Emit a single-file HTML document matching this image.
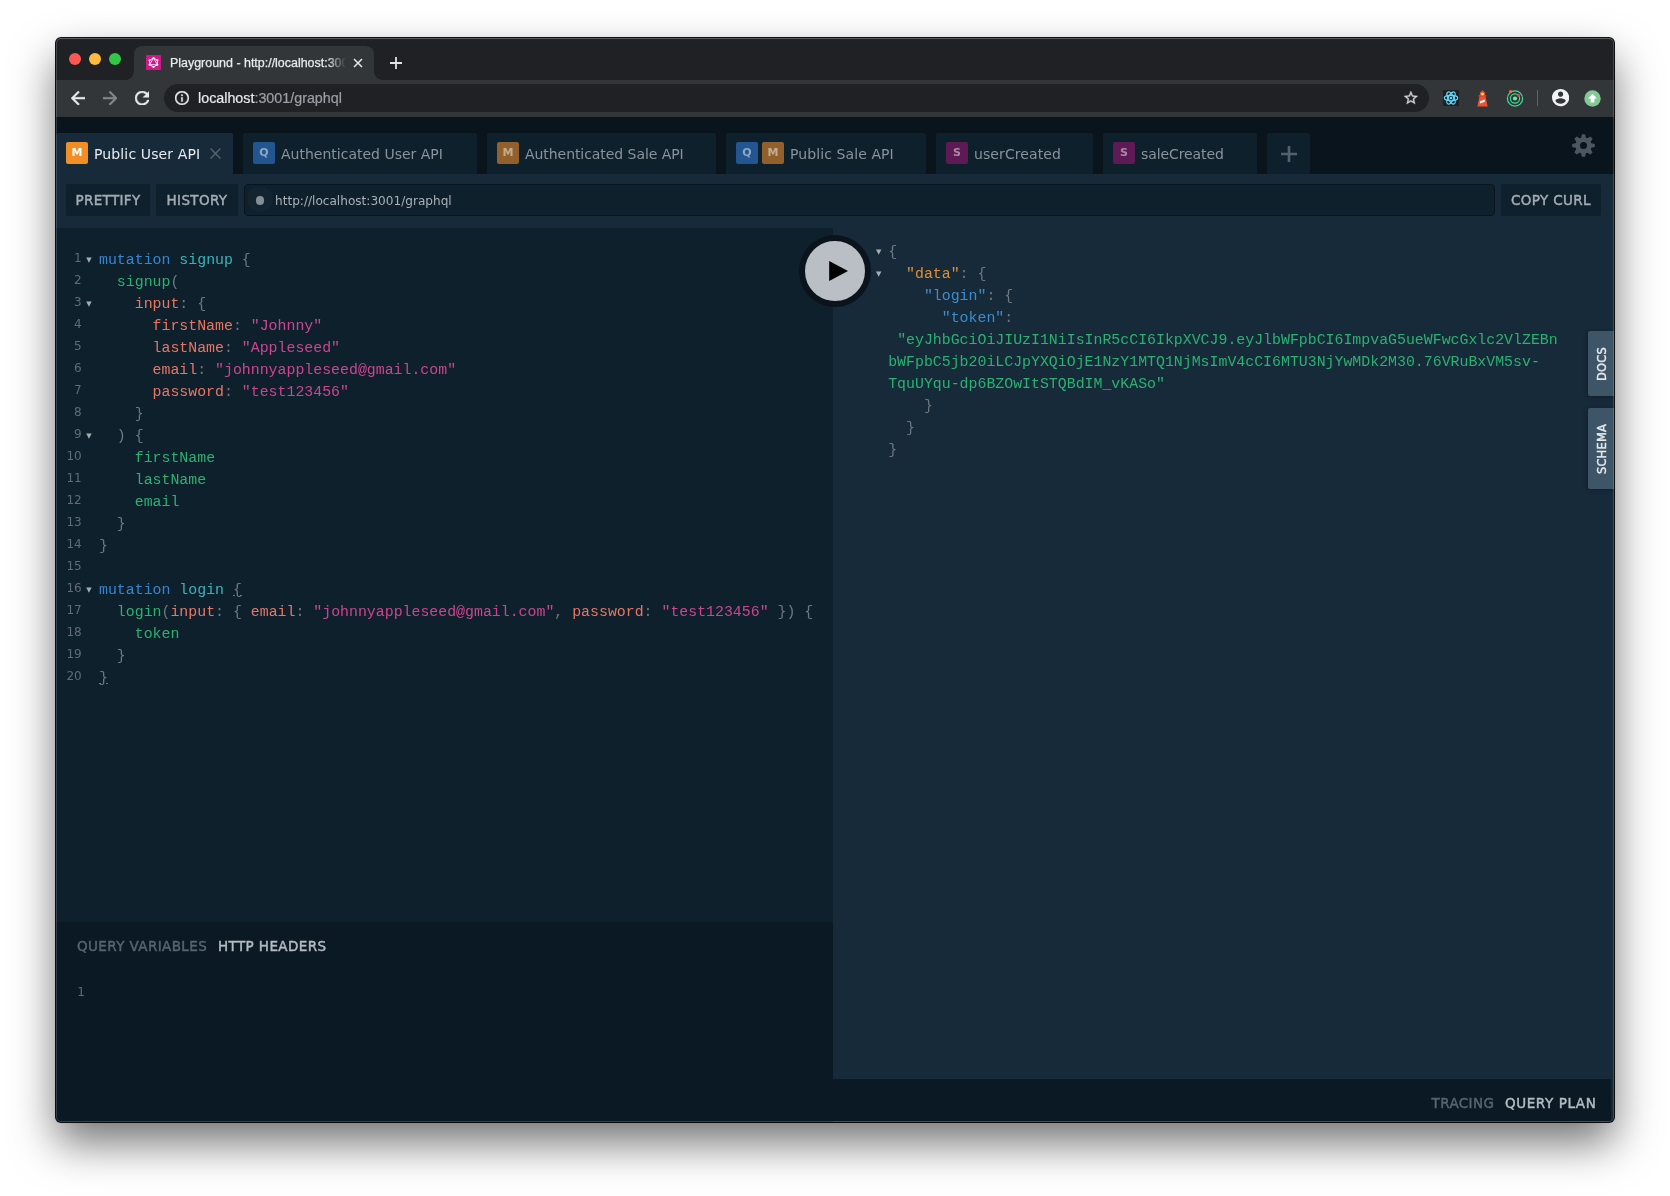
<!DOCTYPE html>
<html lang="en">
<head>
<meta charset="utf-8">
<title>Playground - http://localhost:3001/graphql</title>
<style>
*{box-sizing:border-box;margin:0;padding:0}
html,body{width:1670px;height:1196px;background:#fff;overflow:hidden}
body{position:relative;font-family:"Liberation Sans",sans-serif}
#win{position:absolute;left:56px;top:38px;width:1558px;height:1084px;border-radius:5px;background:#172a3a;
  box-shadow:0 0 0 1px rgba(0,0,0,.93),0 21px 44px rgba(0,0,0,.55),0 0 3px rgba(0,0,0,.12);overflow:hidden}
#inner{will-change:transform;position:absolute;left:-1px;top:-1px;width:1560px;height:1085px}
#hl{position:absolute;left:0;top:0;right:0;bottom:0;border-radius:5px;box-shadow:inset 0 0 0 1px rgba(255,255,255,.17),inset 0 1px 0 0 rgba(255,255,255,.12);pointer-events:none}
.abs{position:absolute}
/* chrome */
#strip{left:0;top:0;width:1560px;height:43px;background:#202124}
.tl{position:absolute;top:16px;width:12px;height:12px;border-radius:50%}
#ctab{left:79px;top:9px;width:240px;height:34px;background:#323639;border-radius:8px 8px 0 0}
#ctab:before,#ctab:after{content:"";position:absolute;bottom:0;width:8px;height:8px;background:radial-gradient(circle at 0 0,transparent 7.5px,#323639 8px)}
#ctab:before{left:-8px}
#ctab:after{right:-8px;transform:scaleX(-1)}
#toolbar{left:0;top:43px;width:1560px;height:37px;background:#323639}
#omni{left:109px;top:4px;width:1265px;height:28px;border-radius:14px;background:#202124}
/* playground */
#pg{left:0;top:80px;width:1560px;height:1005px;background:#172a3a}
#ptabs{left:0;top:0;width:1560px;height:57px;background:#09141c}
.sans{font-family:"DejaVu Sans","Liberation Sans",sans-serif}
.mono{font-family:"Liberation Mono",monospace}

/* pg tabs */
.ptab{position:absolute;top:16px;height:41px;background:#0f202d;border-radius:2px 2px 0 0;color:#89939b;font:14px "DejaVu Sans","Liberation Sans",sans-serif;white-space:nowrap}
.ptab.act{background:#172a3a;color:#e9ebed}
.ptab .t{position:absolute;top:1px;line-height:41px}
.ic{position:absolute;top:9px;width:22px;height:22px;border-radius:2px;color:rgba(255,255,255,.55);font:bold 11px/22px "DejaVu Sans","Liberation Sans",sans-serif;text-align:center}
.ptab .ic{color:rgba(255,255,255,.48)}.ic.m{background:#91602c}.ic.q{background:#235690}.ic.s{background:#5e1a54}
.ptab.act .ic.m{background:#f18f26;color:#fff}
#ptool{left:0;top:57px;width:1560px;height:54px;background:#172a3a}
.btn{position:absolute;top:10px;height:31.5px;background:#0f202d;border-radius:2px;color:#a3abb2;font:13.5px/32px "DejaVu Sans","Liberation Sans",sans-serif;-webkit-text-stroke:.45px #a3abb2;letter-spacing:.35px;text-align:center;white-space:nowrap}
#url{position:absolute;left:189px;top:10px;width:1251px;height:31.5px;background:#0f202d;border:1px solid #09141c;border-radius:4px;color:#a9b0b6;font:12.1px/29px "DejaVu Sans","Liberation Sans",sans-serif}
#editor{left:0;top:111px;width:778px;height:694px;background:#0f202d}
#vars{left:0;top:805px;width:778px;height:200px;background:#0b1924}
#result{left:778px;top:111px;width:781px;height:851px;background:#172a3a}
#bbar{left:0;top:962px;width:1556px;height:42px;background:#0b1924}
.ln{position:absolute;left:0;width:26.7px;text-align:right;color:#5f6b76;font:12px/22px "DejaVu Sans","Liberation Sans",sans-serif}
.cl{position:absolute;left:44px;white-space:pre;font:14.88px/22px "Liberation Mono",monospace;color:#6c7882}
.fd{position:absolute;width:10px;text-align:center;color:#a5adb3;font:7px/22px "DejaVu Sans",sans-serif}
.k{color:#3585d2}.d{color:#38b4b9}.p{color:#2bb170}.a{color:#e97663}.s{color:#cc4590}
.rk{color:#e28f2c}.rb{color:#3c8ccf}.rs{color:#2bb170}
.u{text-decoration:underline}

.vt{font:13.5px/20px "DejaVu Sans","Liberation Sans",sans-serif;white-space:nowrap;-webkit-text-stroke:.45px;letter-spacing:.4px}
.sdt{width:26px;background:#3d5567;border-radius:2px 0 0 2px;box-shadow:-1px 1px 4px rgba(0,0,0,.3)}
.sdt span{position:absolute;left:calc(50% + 1px);top:50%;transform:translate(-50%,-50%) rotate(-90deg);color:#e6eaed;font:11.5px/14px "DejaVu Sans","Liberation Sans",sans-serif;-webkit-text-stroke:.4px;letter-spacing:.2px;white-space:nowrap}
#play{left:744px;top:118px;width:72px;height:72px;border-radius:50%;background:#b9bfc4;border:6px solid #0b141c}

#ctitle{left:36px;top:0;width:176px;overflow:hidden;white-space:nowrap;color:#e8eaed;font:12.45px/34px "Liberation Sans",sans-serif;-webkit-text-stroke:.25px #e8eaed;-webkit-mask-image:linear-gradient(90deg,#000 157px,transparent 176px);mask-image:linear-gradient(90deg,#000 157px,transparent 176px)}
#ourl{left:34px;top:0;color:#9aa0a6;font:14.3px/28px "Liberation Sans",sans-serif;white-space:nowrap;-webkit-text-stroke:.2px}
</style>
</head>
<body>
<div id="win"><div id="inner">
  <div id="strip" class="abs">
    <div class="tl" style="left:14px;background:#fc5753"></div>
    <div class="tl" style="left:34px;background:#fdbc40"></div>
    <div class="tl" style="left:54px;background:#33c748"></div>

    <div id="ctab" class="abs">
      <svg class="abs" style="left:12.1px;top:8.9px" width="15" height="15" viewBox="0 0 16 16"><rect width="16" height="16" rx="1" fill="#d0188a"/><g fill="none" stroke="#fff" stroke-width="0.9"><path d="M8 3.2L12.2 5.6V10.4L8 12.8L3.8 10.4V5.6Z"/><path d="M8 3.2L12.2 10.4H3.8Z"/></g><g fill="#fff"><circle cx="8" cy="3.2" r="1.1"/><circle cx="12.2" cy="5.6" r="1.1"/><circle cx="12.2" cy="10.4" r="1.1"/><circle cx="8" cy="12.8" r="1.1"/><circle cx="3.8" cy="10.4" r="1.1"/><circle cx="3.8" cy="5.6" r="1.1"/></g></svg>
      <div id="ctitle" class="abs">Playground - http://localhost:3001/graphql</div>
      <svg class="abs" style="left:219px;top:12px" width="10" height="10" viewBox="0 0 10 10"><path d="M1 1L9 9M9 1L1 9" stroke="#e8eaed" stroke-width="1.5" fill="none"/></svg>
    </div>
    <svg class="abs" style="left:334px;top:19px" width="14" height="14" viewBox="0 0 14 14"><path d="M7 1V13M1 7H13" stroke="#e0e2e5" stroke-width="1.8" fill="none"/></svg>
  </div>
  <div id="toolbar" class="abs">

    <svg class="abs" style="left:15.8px;top:10.7px" width="14.4" height="14.4" viewBox="4 4 16 16"><path d="M20 11H7.83l5.59-5.59L12 4l-8 8 8 8 1.41-1.41L7.83 13H20v-2z" fill="#e8eaed" stroke="#e8eaed" stroke-width=".5"/></svg>
    <svg class="abs" style="left:47.9px;top:10.7px" width="14.4" height="14.4" viewBox="4 4 16 16"><path d="M12 4l-1.41 1.41L16.17 11H4v2h12.17l-5.58 5.59L12 20l8-8z" fill="#84878b" stroke="#84878b" stroke-width=".5"/></svg>
    <svg class="abs" style="left:80px;top:10.9px" width="14.4" height="14.4" viewBox="4 4 16 16"><path d="M17.65 6.35C16.2 4.9 14.21 4 12 4c-4.42 0-7.99 3.58-7.99 8s3.57 8 7.99 8c3.73 0 6.84-2.55 7.73-6h-2.08c-.82 2.33-3.04 4-5.65 4-3.31 0-6-2.69-6-6s2.69-6 6-6c1.66 0 3.14.69 4.22 1.78L13 11h7V4l-2.35 2.35z" fill="#e8eaed" stroke="#e8eaed" stroke-width=".5"/></svg>
    <div id="omni" class="abs">
      <svg class="abs" style="left:10.9px;top:6.9px" width="14" height="14" viewBox="2 2 20 20"><path d="M11 17h2v-6h-2v6zm1-15C6.48 2 2 6.48 2 12s4.48 10 10 10 10-4.48 10-10S17.52 2 12 2zm0 18c-4.41 0-8-3.59-8-8s3.59-8 8-8 8 3.59 8 8-3.59 8-8 8zM11 9h2V7h-2v2z" fill="#e8eaed" stroke="#e8eaed" stroke-width=".5"/></svg>
      <div id="ourl" class="abs"><span style="color:#e8eaed">localhost</span>:3001/graphql</div>
      <svg class="abs" style="left:1240.2px;top:6.8px" width="13.8" height="13.8" viewBox="2 2 20 20"><path d="M22 9.24l-7.19-.62L12 2 9.19 8.63 2 9.24l5.46 4.73L5.82 21 12 17.27 18.18 21l-1.63-7.03L22 9.24zM12 15.4l-3.76 2.27 1-4.28-3.32-2.88 4.38-.38L12 6.1l1.71 4.04 4.38.38-3.32 2.88 1 4.28L12 15.4z" fill="#d2d5d9" stroke="#d2d5d9" stroke-width=".5"/></svg>
    </div>
    <svg class="abs" style="left:1388px;top:10px" width="16" height="16" viewBox="0 0 16 16"><rect width="16" height="16" fill="#1f2124"/><g fill="none" stroke="#61dafb" stroke-width="1.15"><ellipse cx="8" cy="8" rx="6.7" ry="2.7"/><ellipse cx="8" cy="8" rx="6.7" ry="2.7" transform="rotate(60 8 8)"/><ellipse cx="8" cy="8" rx="6.7" ry="2.7" transform="rotate(120 8 8)"/></g><circle cx="8" cy="8" r="1.3" fill="#61dafb"/></svg>
    <svg class="abs" style="left:1421px;top:9.5px" width="13" height="17" viewBox="0 0 13 17"><path d="M6.5 0.3L9.4 2.8H3.6Z" fill="#e8452c"/><rect x="3.9" y="2.6" width="5.2" height="3" fill="#f0502e"/><rect x="2.6" y="5.2" width="7.8" height="1.5" fill="#e8452c"/><path d="M3.5 6.6H9.5L11.7 16.4H1.3Z" fill="#f0502e"/><circle cx="6.5" cy="3.9" r="1.5" fill="#f9dc74"/><path d="M3.9 11.2L8.8 9.5V11.7L3.9 13.4Z" fill="#fff"/></svg>
    <svg class="abs" style="left:1451px;top:9px" width="18" height="18" viewBox="0 0 18 18"><g fill="none" stroke="#3ddc97" stroke-width="1.2"><circle cx="9" cy="9.5" r="7.6"/><circle cx="9" cy="9.5" r="4.6"/></g><circle cx="9" cy="9.5" r="2.1" fill="#5ef0b0"/><circle cx="4.6" cy="2.6" r="1.6" fill="#f2722c"/><circle cx="12.6" cy="6.2" r="1.5" fill="#e5403a"/></svg>
    <div class="abs" style="left:1482px;top:10px;width:1px;height:16px;background:#5f6368"></div>
    <svg class="abs" style="left:1496.5px;top:9.4px" width="17.2" height="17.2" viewBox="2 2 20 20"><path d="M12 2C6.48 2 2 6.48 2 12s4.48 10 10 10 10-4.48 10-10S17.52 2 12 2zm0 3c1.66 0 3 1.34 3 3s-1.34 3-3 3-3-1.34-3-3 1.34-3 3-3zm0 14.2c-2.5 0-4.71-1.28-6-3.22.03-1.99 4-3.08 6-3.08 1.99 0 5.97 1.09 6 3.08-1.29 1.94-3.5 3.22-6 3.22z" fill="#f1f3f4"/></svg>
    <svg class="abs" style="left:1528.5px;top:9.5px" width="17" height="17" viewBox="0 0 17 17"><circle cx="8.5" cy="8.5" r="8.2" fill="#81c995"/><path d="M8.5 3.8L13 8.4H10.4V12.4H6.6V8.4H4Z" fill="#fff"/></svg>
  </div>
  <div id="pg" class="abs">
<div id="ptabs" class="abs"></div>
<div class="ptab act" style="left:1px;width:177px"><div class="ic m" style="left:10px">M</div><div class="t" style="left:38px;letter-spacing:0.13px">Public User API</div><svg class="abs" style="left:154.3px;top:15px" width="11" height="11" viewBox="0 0 11 11"><path d="M0.6 0.6L10.4 10.4M10.4 0.6L0.6 10.4" stroke="#56626d" stroke-width="1.4" fill="none"/></svg></div>
<div class="ptab" style="left:188px;width:234px"><div class="ic q" style="left:10px">Q</div><div class="t" style="left:38px">Authenticated User API</div></div>
<div class="ptab" style="left:432px;width:229px"><div class="ic m" style="left:10px">M</div><div class="t" style="left:38px;letter-spacing:-0.06px">Authenticated Sale API</div></div>
<div class="ptab" style="left:671px;width:200px"><div class="ic q" style="left:10px">Q</div><div class="ic m" style="left:36px">M</div><div class="t" style="left:64px;letter-spacing:0.09px">Public Sale API</div></div>
<div class="ptab" style="left:881px;width:157px"><div class="ic s" style="left:10px">S</div><div class="t" style="left:38px;letter-spacing:0.09px">userCreated</div></div>
<div class="ptab" style="left:1048px;width:154px"><div class="ic s" style="left:10px">S</div><div class="t" style="left:38px;letter-spacing:-0.09px">saleCreated</div></div>
<div class="ptab" style="left:1212px;width:43px"><svg class="abs" style="left:13px;top:12px" width="18" height="18" viewBox="0 0 18 18"><path d="M9 1V17M1 9H17" stroke="#53616d" stroke-width="2.6" fill="none"/></svg></div>
<svg id="gear" class="abs" style="left:1516px;top:16px" width="25" height="25" viewBox="-12.5 -12.5 25 25"><g fill="#4b5661"><circle r="8.1"/><path d="M-2.6 -7L-1.6 -11.3H1.6L2.6 -7Z" transform="rotate(0)"/><path d="M-2.6 -7L-1.6 -11.3H1.6L2.6 -7Z" transform="rotate(45)"/><path d="M-2.6 -7L-1.6 -11.3H1.6L2.6 -7Z" transform="rotate(90)"/><path d="M-2.6 -7L-1.6 -11.3H1.6L2.6 -7Z" transform="rotate(135)"/><path d="M-2.6 -7L-1.6 -11.3H1.6L2.6 -7Z" transform="rotate(180)"/><path d="M-2.6 -7L-1.6 -11.3H1.6L2.6 -7Z" transform="rotate(225)"/><path d="M-2.6 -7L-1.6 -11.3H1.6L2.6 -7Z" transform="rotate(270)"/><path d="M-2.6 -7L-1.6 -11.3H1.6L2.6 -7Z" transform="rotate(315)"/></g><circle r="3.5" fill="#09141c"/></svg>
<div id="ptool" class="abs">
<div class="btn" style="left:11px;width:84px">PRETTIFY</div>
<div class="btn" style="left:101px;width:82px">HISTORY</div>
<div id="url"><span class="abs" style="left:2px;top:1px;width:26px;height:26px;border-radius:50%;background:#13232f"></span><span class="abs" style="left:10.8px;top:11px;width:8.5px;height:8.5px;border-radius:50%;background:#848e96"></span><span class="abs" style="left:30px;top:1.7px">http://localhost:3001/graphql</span></div>
<div class="btn" style="left:1446px;width:100px">COPY CURL</div>
</div>
<div id="editor" class="abs">
<div class="ln" style="top:19px">1</div>
<div class="fd" style="left:29px;top:21px">&#9660;</div>
<div class="cl" style="top:21px"><span class="k">mutation</span> <span class="d">signup</span> {</div>
<div class="ln" style="top:41px">2</div>
<div class="cl" style="top:43px">  <span class="p">signup</span>(</div>
<div class="ln" style="top:63px">3</div>
<div class="fd" style="left:29px;top:65px">&#9660;</div>
<div class="cl" style="top:65px">    <span class="a">input</span>: {</div>
<div class="ln" style="top:85px">4</div>
<div class="cl" style="top:87px">      <span class="a">firstName</span>: <span class="s">"Johnny"</span></div>
<div class="ln" style="top:107px">5</div>
<div class="cl" style="top:109px">      <span class="a">lastName</span>: <span class="s">"Appleseed"</span></div>
<div class="ln" style="top:129px">6</div>
<div class="cl" style="top:131px">      <span class="a">email</span>: <span class="s">"johnnyappleseed@gmail.com"</span></div>
<div class="ln" style="top:151px">7</div>
<div class="cl" style="top:153px">      <span class="a">password</span>: <span class="s">"test123456"</span></div>
<div class="ln" style="top:173px">8</div>
<div class="cl" style="top:175px">    }</div>
<div class="ln" style="top:195px">9</div>
<div class="fd" style="left:29px;top:197px">&#9660;</div>
<div class="cl" style="top:197px">  ) {</div>
<div class="ln" style="top:217px">10</div>
<div class="cl" style="top:219px">    <span class="p">firstName</span></div>
<div class="ln" style="top:239px">11</div>
<div class="cl" style="top:241px">    <span class="p">lastName</span></div>
<div class="ln" style="top:261px">12</div>
<div class="cl" style="top:263px">    <span class="p">email</span></div>
<div class="ln" style="top:283px">13</div>
<div class="cl" style="top:285px">  }</div>
<div class="ln" style="top:305px">14</div>
<div class="cl" style="top:307px">}</div>
<div class="ln" style="top:327px">15</div>
<div class="ln" style="top:349px">16</div>
<div class="fd" style="left:29px;top:351px">&#9660;</div>
<div class="cl" style="top:351px"><span class="k">mutation</span> <span class="d">login</span> <span class="u">{</span></div>
<div class="ln" style="top:371px">17</div>
<div class="cl" style="top:373px">  <span class="p">login</span>(<span class="a">input</span>: { <span class="a">email</span>: <span class="s">"johnnyappleseed@gmail.com"</span>, <span class="a">password</span>: <span class="s">"test123456"</span> }) {</div>
<div class="ln" style="top:393px">18</div>
<div class="cl" style="top:395px">    <span class="p">token</span></div>
<div class="ln" style="top:415px">19</div>
<div class="cl" style="top:417px">  }</div>
<div class="ln" style="top:437px">20</div>
<div class="cl" style="top:439px"><span class="u">}</span></div>
</div>
<div id="vars" class="abs">
<div class="abs vt" style="left:22px;top:14px;color:#566470">QUERY VARIABLES</div>
<div class="abs vt" style="left:163px;top:14px;color:#b4bbc1">HTTP HEADERS</div>
<div class="ln" style="left:0;width:30px;top:59px">1</div>
</div>
<div id="result" class="abs">
<div class="fd" style="left:40.8px;top:13px">&#9660;</div>
<div class="cl" style="left:55.2px;top:13px">{</div>
<div class="fd" style="left:40.8px;top:35px">&#9660;</div>
<div class="cl" style="left:55.2px;top:35px">  <span class="rk">"data"</span>: {</div>
<div class="cl" style="left:55.2px;top:57px">    <span class="rb">"login"</span>: {</div>
<div class="cl" style="left:55.2px;top:79px">      <span class="rb">"token"</span>:</div>
<div class="cl" style="left:55.2px;top:101px"> <span class="rs">"eyJhbGciOiJIUzI1NiIsInR5cCI6IkpXVCJ9.eyJlbWFpbCI6ImpvaG5ueWFwcGxlc2VlZEBn</span></div>
<div class="cl" style="left:55.2px;top:123px"><span class="rs">bWFpbC5jb20iLCJpYXQiOjE1NzY1MTQ1NjMsImV4cCI6MTU3NjYwMDk2M30.76VRuBxVM5sv-</span></div>
<div class="cl" style="left:55.2px;top:145px"><span class="rs">TquUYqu-dp6BZOwItSTQBdIM_vKASo"</span></div>
<div class="cl" style="left:55.2px;top:167px">    }</div>
<div class="cl" style="left:55.2px;top:189px">  }</div>
<div class="cl" style="left:55.2px;top:211px">}</div>
<div class="abs sdt" style="left:755px;top:103px;height:65px"><span>DOCS</span></div>
<div class="abs sdt" style="left:755px;top:180px;height:81px"><span>SCHEMA</span></div>
</div>
<div id="play" class="abs"><svg width="60" height="60" viewBox="0 0 60 60"><path d="M24.2 20V40L43 30Z" fill="#000"/></svg></div>
<div id="bbar" class="abs">
<div class="abs vt" style="left:1376.5px;top:14px;color:#566470">TRACING</div>
<div class="abs vt" style="left:1450px;top:14px;color:#b4bbc1;letter-spacing:.6px">QUERY PLAN</div>
</div>
  </div>
</div><div id="hl"></div></div>
</body>
</html>
